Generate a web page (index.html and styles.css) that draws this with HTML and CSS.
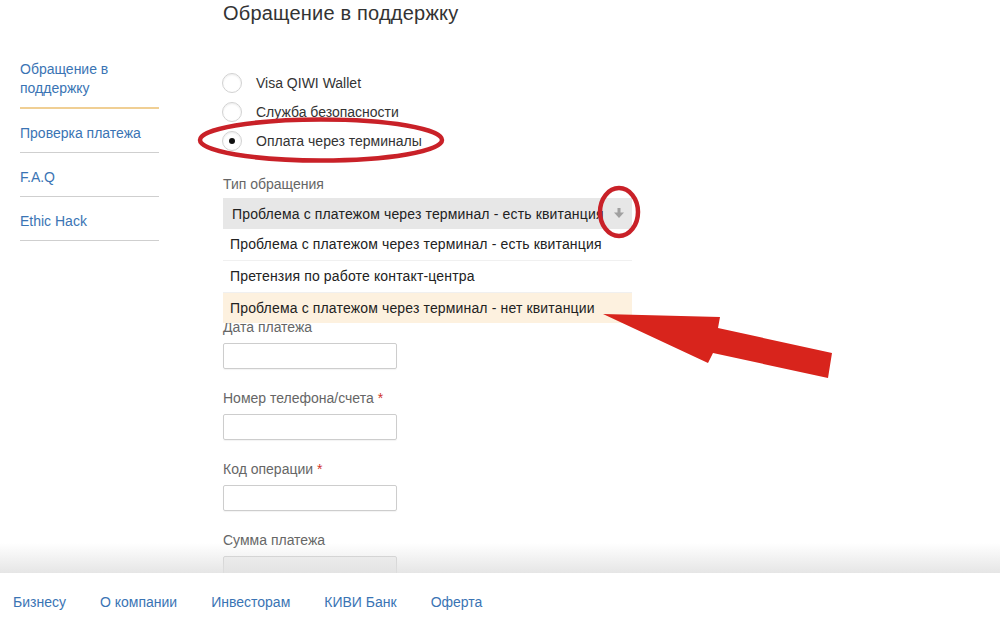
FILE: index.html
```html
<!DOCTYPE html>
<html lang="ru">
<head>
    <meta charset="UTF-8">
    <title>Обращение в поддержку</title>
    <link rel="stylesheet" href="styles.css">
</head>
<body>
    <div class="page">
        <!-- Боковое меню -->
        <ul class="side-menu">
            <li class="active"><a href="#">Обращение в поддержку</a></li>
            <li><a href="#">Проверка платежа</a></li>
            <li><a href="#">F.A.Q</a></li>
            <li><a href="#">Ethic Hack</a></li>
        </ul>

        <!-- Форма -->
        <div class="main">
            <h1>Обращение в поддержку</h1>

            <div class="radios">
                <label class="radio"><span class="circle"></span>Visa QIWI Wallet</label>
                <label class="radio"><span class="circle"></span>Служба безопасности</label>
                <label class="radio"><span class="circle checked"></span>Оплата через терминалы</label>
            </div>

            <div class="label gray">Тип обращения</div>
            <div class="select">
                <div class="select-value">Проблема с платежом через терминал - есть квитанция</div>
                <svg class="select-arrow" width="10" height="11" viewBox="0 0 10 11">
                    <rect x="3.5" y="0" width="3" height="5" fill="#a0a0a0"/>
                    <polygon points="0,4.5 10,4.5 5,10" fill="#a0a0a0"/>
                </svg>
                <ul class="options">
                    <li>Проблема с платежом через терминал - есть квитанция</li>
                    <li>Претензия по работе контакт-центра</li>
                    <li class="hover">Проблема с платежом через терминал - нет квитанции</li>
                </ul>
            </div>

            <div class="field first">
                <div class="label gray">Дата платежа</div>
                <div class="input"></div>
            </div>
            <div class="field">
                <div class="label gray">Номер телефона/счета <span class="req">*</span></div>
                <div class="input"></div>
            </div>
            <div class="field">
                <div class="label gray">Код операции <span class="req">*</span></div>
                <div class="input"></div>
            </div>
            <div class="field">
                <div class="label gray">Сумма платежа</div>
                <div class="input disabled"></div>
            </div>
        </div>
    </div>

    <!-- Подвал -->
    <div class="footer">
        <a href="#">Бизнесу</a>
        <a href="#">О компании</a>
        <a href="#">Инвесторам</a>
        <a href="#">КИВИ Банк</a>
        <a href="#">Оферта</a>
    </div>

    <!-- Пометки поверх скриншота -->
    <svg class="marks" width="1000" height="630" viewBox="0 0 1000 630">
        <ellipse cx="321" cy="140" rx="121" ry="20.5" fill="none" stroke="#c92128" stroke-width="4.5"/>
        <ellipse cx="619" cy="212" rx="19" ry="24" fill="none" stroke="#c92128" stroke-width="4.5"/>
        <polygon points="603,314 720,317 718,328 832,353 828,378 713,353 708,363" fill="#d8241c"/>
    </svg>
</body>
</html>
```

FILE: styles.css
```css
body {
    margin: 0;
    font-family: "Liberation Sans", Arial, sans-serif;
    font-size: 14px;
    color: #333;
    background: #fff;
    height: 630px;
    overflow: hidden;
}

a {
    color: #3a74b4;
    text-decoration: none;
}

.page {
    display: flex;
    height: 573px;
    overflow: hidden;
}

/* Боковое меню */
.side-menu {
    list-style: none;
    margin: 60px 0 0 20px;
    padding: 0;
    width: 139px;
}

.side-menu li {
    padding: 15px 0 9px;
    border-bottom: 1px solid #cfcfcf;
    line-height: 19px;
}

.side-menu li:first-child {
    padding-top: 0;
}

.side-menu li.active {
    border-bottom: 2px solid #f0cf94;
    padding-bottom: 9px;
}

.side-menu li.active a {
    display: block;
    width: 110px;
}

/* Основная колонка */
.main {
    margin-left: 64px;
    width: 420px;
}

h1 {
    margin: 0;
    font-size: 20px;
    font-weight: normal;
    line-height: 26px;
    letter-spacing: 0.2px;
    color: #333;
}

.radios {
    margin-top: 42px;
}

.radio {
    display: flex;
    align-items: center;
    height: 29px;
    color: #333;
}

.circle {
    width: 18px;
    height: 18px;
    border: 1px solid #d2d2d2;
    border-radius: 50%;
    margin: 0 14px 0 -1px;
    box-shadow: inset 0 1px 2px rgba(0, 0, 0, 0.08);
    display: flex;
    align-items: center;
    justify-content: center;
}

.circle.checked::after {
    content: "";
    width: 6px;
    height: 6px;
    border-radius: 50%;
    background: #111;
}

.label {
    line-height: 18px;
}

.gray {
    color: #666;
}

.label.gray {
    margin-top: 20px;
    margin-bottom: 5px;
}

.req {
    color: #d0342c;
}

/* Выпадающий список */
.select {
    position: relative;
    width: 409px;
    height: 31px;
    background: #e7e7e7;
    display: flex;
    align-items: center;
}

.select-value {
    padding-left: 9px;
    width: 375px;
    overflow: hidden;
    white-space: nowrap;
    letter-spacing: 0.15px;
    color: #222;
}

.select-arrow {
    margin-left: 7px;
}

.options {
    position: absolute;
    top: 31px;
    left: 0;
    width: 409px;
    list-style: none;
    margin: 0;
    padding: 0;
    background: #fff;
    z-index: 2;
}

.options li {
    height: 31px;
    line-height: 31px;
    padding-left: 7px;
    border-bottom: 1px solid #f0f0f0;
    letter-spacing: 0.15px;
    color: #222;
}

.options li.hover {
    background: #fdf1df;
    height: 30px;
    line-height: 30px;
    border-bottom: none;
}

/* Поля */
.field .label {
    margin-top: 20px;
    margin-bottom: 7px;
}

.field.first .label {
    margin-top: 89px;
}

.input {
    width: 172px;
    height: 24px;
    border: 1px solid #cdcdcd;
    border-radius: 2px;
    box-shadow: 0 1px 1px rgba(0, 0, 0, 0.05);
}

.input.disabled {
    background: #f2f2f2;
}

/* Подвал */
.footer {
    position: relative;
    height: 57px;
    display: flex;
    align-items: center;
    gap: 34px;
    padding-left: 13px;
    background: #fff;
}

.footer::before {
    content: "";
    position: absolute;
    left: 0;
    right: 0;
    top: -30px;
    height: 30px;
    background: linear-gradient(rgba(225, 225, 225, 0), rgba(225, 225, 225, 0.85));
}

.marks {
    position: absolute;
    left: 0;
    top: 0;
    pointer-events: none;
    z-index: 5;
}
```
